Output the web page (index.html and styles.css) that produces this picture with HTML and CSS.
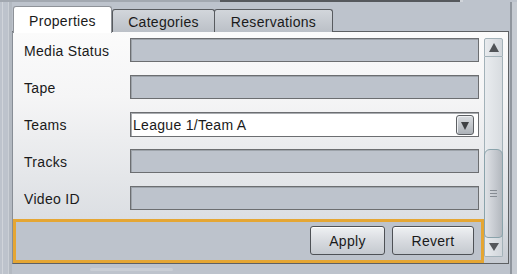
FILE: index.html
```html
<!DOCTYPE html>
<html>
<head>
<meta charset="utf-8">
<link rel="stylesheet" href="styles.css">
</head>
<body>
<div class="frame">
  <div class="topline"><span class="seg-a"></span><span class="seg-b"></span><span class="seg-c"></span></div>
  <div class="main">
    <div class="leftrail"></div>
    <div class="tabpane">
      <div class="tabs">
        <div class="tab selected w1">Properties</div>
        <div class="tab w2">Categories</div>
        <div class="tab w3">Reservations</div>
      </div>
      <div class="panel">
        <div class="content">
          <div class="rows">
            <div class="row"><span class="label">Media Status</span><span class="field"></span></div>
            <div class="row"><span class="label">Tape</span><span class="field"></span></div>
            <div class="row"><span class="label">Teams</span><span class="field combo"><span class="value">League 1/Team A</span><span class="dropbtn"><span class="tri-down"></span></span></span></div>
            <div class="row"><span class="label">Tracks</span><span class="field"></span></div>
            <div class="row"><span class="label">Video ID</span><span class="field"></span></div>
          </div>
          <div class="actions">
            <button class="btn apply">Apply</button>
            <button class="btn revert">Revert</button>
          </div>
        </div>
        <div class="scrollbar">
          <div class="sb-btn up"><span class="tri-up"></span></div>
          <div class="track">
            <div class="thumb"><span class="grip"></span><span class="grip"></span><span class="grip"></span></div>
          </div>
          <div class="sb-btn down"><span class="tri-down dark"></span></div>
        </div>
      </div>
      <div class="bottomstrip"><span class="ghost"></span></div>
    </div>
    <div class="rightrail"></div>
  </div>
</div>
</body>
</html>
```
FILE: styles.css
```css
* { box-sizing: border-box; margin: 0; padding: 0; }
html, body { width: 517px; height: 274px; overflow: hidden; }
body {
  background: #bdc3cc;
  font: 14px "Liberation Sans", Arial, sans-serif;
  letter-spacing: 0.3px;
  color: #1a1a1a;
}
.frame { display: flex; flex-direction: column; height: 274px; }

.topline { display: flex; height: 2px; }
.topline .seg-a { width: 220px; height: 2px; background: #a2a8b0; }
.topline .seg-b { width: 240px; height: 2px; background: #56595d; }
.topline .seg-c { width: 3px; height: 2px; background: #d0d4da; }

.main { display: flex; flex: 1; }
.leftrail {
  width: 12px;
  background: linear-gradient(90deg, #bdc3cc 0 2px, #d0d4da 2px 3px, #bdc3cc 3px 8px, #cbd0d6 8px 9px, #b3b9c1 9px 12px);
}
.rightrail {
  width: 8px;
  background: linear-gradient(90deg, #bdc3cc 0 1px, #8f959d 1px 3px, #c6cbd2 3px 8px);
}

.tabpane { width: 497px; display: flex; flex-direction: column; padding-top: 4px; }

.tabs {
  display: flex;
  align-items: flex-end;
  height: 26px;
  padding-left: 1px;
  margin-bottom: -1px;
  position: relative;
  z-index: 1;
}
.tab {
  height: 23px;
  display: flex;
  align-items: center;
  justify-content: center;
  padding-top: 2px;
  border: 1px solid #585b5f;
  border-bottom: none;
  border-radius: 3px 3px 0 0;
  background: linear-gradient(#d2d6db, #bbc0c7);
  color: #1a1a1a;
}
.tab.selected {
  height: 27px;
  background: #ffffff;
  border-color: #8e9298;
  padding-top: 1px;
  margin-bottom: -1px;
}
.w1 { width: 99px; }
.w2 { width: 103px; }
.w3 { width: 119px; margin-left: -1px; }

.panel {
  height: 233px;
  display: flex;
  border: 1px solid #5d6063;
  border-left-color: #888e96;
  background: linear-gradient(#fbfbfb 0, #f5f5f6 28%, #dcdfe3 80%, #c6cbd2 100%);
}
.content { width: 471px; display: flex; flex-direction: column; }
.rows {
  display: flex;
  flex-direction: column;
  gap: 13px;
  padding: 6px 0 9px;
}
.row { display: flex; align-items: center; height: 24px; }
.label { width: 117px; padding-left: 11px; padding-top: 1px; white-space: nowrap; }
.field {
  width: 349px;
  height: 24px;
  background: #bdc3cc;
  border: 1px solid #6c6e71;
  box-shadow: inset 1px 1px 0 #9da3aa;
}
.field.combo {
  height: 25px;
  background: #ffffff;
  box-shadow: inset 1px 1px 0 #a9acb0;
  display: flex;
  align-items: center;
  justify-content: space-between;
  padding: 1px 4px 0 2px;
}
.dropbtn {
  width: 18px;
  height: 20px;
  border: 1px solid #5d6064;
  border-radius: 3px;
  background: linear-gradient(#d9dce0, #adb2b8);
  box-shadow: inset 1px 1px 0 #eef0f2;
  display: flex;
  align-items: center;
  justify-content: center;
}
.tri-down {
  width: 0; height: 0;
  border-left: 4px solid transparent;
  border-right: 4px solid transparent;
  border-top: 8px solid #3f4144;
  margin-top: 2px;
}
.tri-down.dark { border-top-color: #55585c; border-left-width: 5px; border-right-width: 5px; border-top-width: 8px; margin-top: 0; }
.tri-up {
  width: 0; height: 0;
  border-left: 5px solid transparent;
  border-right: 5px solid transparent;
  border-bottom: 9px solid #505357;
}

.actions {
  height: 44px;
  border: 3px solid #e5a633;
  background: #bdc3cc;
  display: flex;
  justify-content: flex-end;
  align-items: flex-start;
  gap: 7px;
  padding: 4px 7px 0 0;
}
.btn {
  height: 29px;
  border: 1px solid #4e5156;
  border-radius: 3px;
  background: linear-gradient(#eff1f3, #d8dbe0 50%, #c4c9cf);
  box-shadow: inset 0 1px 0 #ffffff;
  font: 14px "Liberation Sans", Arial, sans-serif;
  letter-spacing: 0.3px;
  color: #1a1a1a;
  padding-top: 1px;
}
.apply { width: 75px; }
.revert { width: 82px; }

.scrollbar {
  width: 19px;
  margin: 6px 5px 6px 0;
  display: flex;
  flex-direction: column;
}
.sb-btn {
  height: 19px;
  border: 1px solid #a3b2b9;
  background: linear-gradient(90deg, #e8ebee, #d1d6db);
  display: flex;
  align-items: center;
  justify-content: center;
}
.sb-btn.up { border-radius: 2px 2px 0 0; }
.sb-btn.down { border-radius: 0 0 2px 2px; border-top: none; }
.track {
  flex: 1;
  border-left: 1px solid #a3b2b9;
  border-right: 1px solid #a3b2b9;
  background: linear-gradient(90deg, #e9ecef, #d8dce0);
  display: flex;
  flex-direction: column;
  justify-content: flex-end;
}
.thumb {
  height: 89px;
  margin: 0 -1px;
  border: 1px solid #8aa3ab;
  border-radius: 6px 6px 4px 4px;
  background: linear-gradient(90deg, #dfe2e6, #c5c9cf 60%, #b3b8be);
  display: flex;
  flex-direction: column;
  align-items: center;
  justify-content: center;
  gap: 2px;
}
.grip { width: 7px; height: 1px; background: #868c93; }

.bottomstrip { flex: 1; display: flex; align-items: flex-end; padding: 0 0 3px 78px; }
.ghost { width: 83px; height: 3px; background: #c9ced5; border-radius: 2px; }
```
